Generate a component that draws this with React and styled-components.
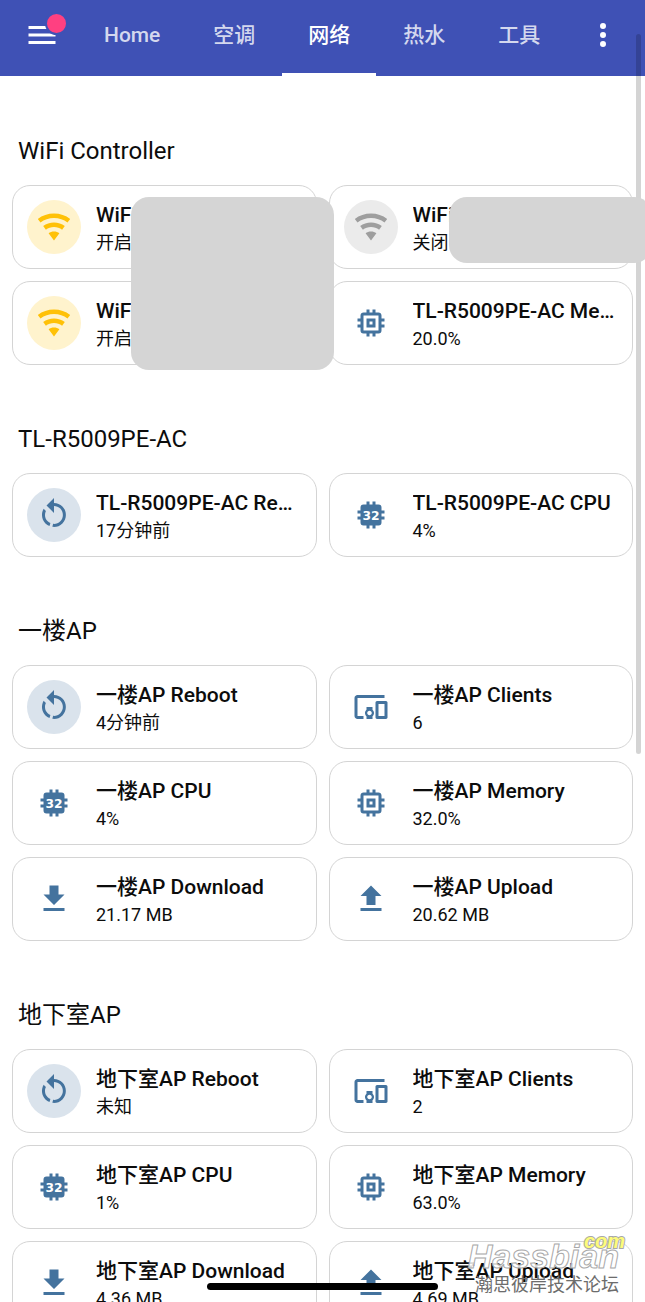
import React from "react";
import styled, { createGlobalStyle } from "styled-components";

const GlobalStyle = createGlobalStyle`
  *, *::before, *::after { box-sizing: border-box; }
  body {
    margin: 0;
    background: #fff;
    color: #0c0c0c;
    font-family: Roboto, "Noto Sans CJK SC", sans-serif;
  }
  button { font: inherit; color: inherit; background: none; border: 0; padding: 0; cursor: pointer; }
  h2, h3, p { margin: 0; font-weight: 400; }
`;

const Screen = styled.div`
  position: relative;
  display: flex;
  flex-direction: column;
  height: 100vh;
  overflow: hidden;
`;

const Toolbar = styled.header`
  flex: none;
  display: flex;
  align-items: stretch;
  height: 76px;
  padding: 0 6px;
  background: #3f51b5;
  color: #fff;
`;

const ToolButton = styled.button`
  position: relative;
  display: flex;
  align-items: center;
  justify-content: center;
  width: 72px;
  padding-bottom: 6px;
`;

const Badge = styled.span`
  position: absolute;
  top: 12px;
  right: 10px;
  width: 23px;
  height: 23px;
  border: 2px solid #3f51b5;
  border-radius: 50%;
  background: #ff4081;
`;

const Tabs = styled.nav`
  flex: 1;
  display: flex;
  gap: 1px;
`;

const Tab = styled.a`
  display: flex;
  align-items: center;
  padding: 0 26px 3px;
  border-bottom: 3px solid ${(p) => (p.$active ? "#fff" : "transparent")};
  color: ${(p) => (p.$active ? "#fff" : "#d4d8ee")};
  font-size: 21px;
  font-weight: 500;
  line-height: 24px;
  text-decoration: none;
`;

const Content = styled.main`
  position: relative;
  flex: 1;
  min-height: 0;
  padding: 1px 12px 12px;
  overflow: hidden auto;
  scrollbar-width: none;
`;

const SectionTitle = styled.h2`
  padding: 58px 6px 18px;
  font-size: 24px;
  line-height: 32px;
`;

const Grid = styled.div`
  display: grid;
  grid-template-columns: repeat(2, minmax(0, 1fr));
  gap: 12px;
`;

const Card = styled.article`
  display: flex;
  align-items: center;
  gap: 15px;
  height: 84px;
  padding: 0 14px;
  border: 1px solid #d4d4d4;
  border-radius: 18px;
  background: #fff;
`;

const tones = {
  blue: { color: "#44739e", fill: "#dae3ec" },
  amber: { color: "#ffc107", fill: "#fff3cd" },
  grey: { color: "#9e9e9e", fill: "#ebebeb" },
};

const Shape = styled.span`
  flex: none;
  display: flex;
  align-items: center;
  justify-content: center;
  width: 54px;
  height: 54px;
  border-radius: 50%;
  color: ${(p) => tones[p.$tone].color};
  background: ${(p) => (p.$filled ? tones[p.$tone].fill : "transparent")};
`;

const Info = styled.div`
  min-width: 0;
  padding-top: 2px;
`;

const Name = styled.h3`
  overflow: hidden;
  font-size: 21px;
  font-weight: 500;
  line-height: 30px;
  white-space: nowrap;
  text-overflow: ellipsis;
`;

const State = styled.p`
  font-size: 18px;
  line-height: 26px;
`;

const Cover = styled.div`
  position: absolute;
  z-index: 2;
  top: 121px;
  left: ${(p) => p.$left};
  width: 203px;
  height: ${(p) => p.$height};
  border-radius: 18px;
  background: #d5d5d5;
`;

const ScrollThumb = styled.div`
  position: absolute;
  z-index: 1;
  top: 34px;
  right: 4px;
  width: 5px;
  height: 720px;
  border-radius: 3px;
  background: rgba(0, 0, 0, 0.17);
`;

const HomeBar = styled.div`
  position: absolute;
  bottom: 12px;
  left: 50%;
  width: 231px;
  height: 7px;
  margin-left: -116px;
  border-radius: 4px;
  background: #000;
`;

const Watermark = styled.div`
  position: absolute;
  right: 26px;
  bottom: 5px;
  color: #6c6c6c;
  font-size: 18px;
  line-height: 24px;
  text-align: right;
`;

const WatermarkName = styled.div`
  color: rgba(255, 255, 255, 0.85);
  font: italic 700 34px/34px "Liberation Sans", sans-serif;
  -webkit-text-stroke: 1px #a8a8a8;
`;

const WatermarkSuffix = styled.div`
  position: absolute;
  top: -10px;
  right: -6px;
  color: #fdfb7a;
  font: italic 700 20px/24px "Liberation Sans", sans-serif;
  -webkit-text-stroke: 2px #a8a8a8;
  paint-order: stroke fill;
`;

const paths = {
  menu: "M3,6H21V8H3V6M3,11H21V13H3V11M3,16H21V18H3V16Z",
  dots: "M12,16A2,2 0 0,1 14,18A2,2 0 0,1 12,20A2,2 0 0,1 10,18A2,2 0 0,1 12,16M12,10A2,2 0 0,1 14,12A2,2 0 0,1 12,14A2,2 0 0,1 10,12A2,2 0 0,1 12,10M12,4A2,2 0 0,1 14,6A2,2 0 0,1 12,8A2,2 0 0,1 10,6A2,2 0 0,1 12,4Z",
  wifi: "M12,21L15.6,16.2C14.6,15.45 13.35,15 12,15C10.65,15 9.4,15.45 8.4,16.2L12,21M12,3C7.95,3 4.21,4.34 1.2,6.6L3,9C5.5,7.12 8.62,6 12,6C15.38,6 18.5,7.12 21,9L22.8,6.6C19.79,4.34 16.05,3 12,3M12,9C9.3,9 6.81,9.89 4.8,11.4L6.6,13.8C8.1,12.67 9.97,12 12,12C14.03,12 15.9,12.67 17.4,13.8L19.2,11.4C17.19,9.89 14.7,9 12,9Z",
  memory: "M17,17H7V7H17M21,11V9H19V7C19,5.89 18.1,5 17,5H15V3H13V5H11V3H9V5H7C5.89,5 5,5.89 5,7V9H3V11H5V13H3V15H5V17A2,2 0 0,0 7,19H9V21H11V19H13V21H15V19H17A2,2 0 0,0 19,17V15H21V13H19V11M13,13H11V11H13M15,9H9V15H15V9Z",
  cpu: "M9,3V5H7A2,2 0 0,0 5,7V9H3V11H5V13H3V15H5V17A2,2 0 0,0 7,19H9V21H11V19H13V21H15V19H17A2,2 0 0,0 19,17V15H21V13H19V11H21V9H19V7A2,2 0 0,0 17,5H15V3H13V5H11V3Z",
  restart: "M12,4C14.1,4 16.1,4.8 17.6,6.3C20.7,9.4 20.7,14.5 17.6,17.6C15.8,19.5 13.3,20.2 10.9,19.9L11.4,17.9C13.1,18.1 14.9,17.5 16.2,16.2C18.5,13.9 18.5,10.1 16.2,7.7C15.1,6.6 13.5,6 12,6V10.6L7,5.6L12,0.6V4M6.3,17.6C3.7,15 3.3,11 5.1,7.9L6.6,9.4C5.5,11.6 5.9,14.4 7.8,16.2C8.3,16.7 8.9,17.1 9.6,17.4L9,19.4C8,19 7.1,18.4 6.3,17.6Z",
  devices: "M3 6h18V4H3c-1.1 0-2 .9-2 2v12c0 1.1.9 2 2 2h4v-2H3V6zm10 6H9v1.78c-.61.55-1 1.33-1 2.22s.39 1.67 1 2.22V20h4v-1.78c.61-.55 1-1.34 1-2.22s-.39-1.67-1-2.22V12zm-2 5.5c-.83 0-1.5-.67-1.5-1.5s.67-1.5 1.5-1.5 1.5.67 1.5 1.5-.67 1.5-1.5 1.5zM22 8h-6c-.5 0-1 .5-1 1v10c0 .5.5 1 1 1h6c.5 0 1-.5 1-1V9c0-.5-.5-1-1-1zm-1 10h-4v-8h4v8z",
  download: "M5,20H19V18H5M19,9H15V3H9V9H5L12,16L19,9Z",
  upload: "M9,16V10H5L12,3L19,10H15V16H9M5,20V18H19V20H5Z",
};

function Icon({ name }) {
  return (
    <svg width="36" height="36" viewBox="0 0 24 24" fill="currentColor" aria-hidden="true">
      <path d={paths[name]} />
      {name === "cpu" && (
        <text x="12" y="15" textAnchor="middle" fill="#fff" fontFamily="DejaVu Sans" fontWeight="700" fontSize="8.2">
          32
        </text>
      )}
    </svg>
  );
}

const tabs = ["Home", "空调", "网络", "热水", "工具"];

const apCards = (name, v) => [
  { icon: "restart", filled: true, name: `${name} Reboot`, state: v[0] },
  { icon: "devices", name: `${name} Clients`, state: v[1] },
  { icon: "cpu", name: `${name} CPU`, state: v[2] },
  { icon: "memory", name: `${name} Memory`, state: v[3] },
  { icon: "download", name: `${name} Download`, state: v[4] },
  { icon: "upload", name: `${name} Upload`, state: v[5] },
];

const sections = [
  {
    title: "WiFi Controller",
    cards: [
      { icon: "wifi", tone: "amber", filled: true, name: "WiFi", state: "开启" },
      { icon: "wifi", tone: "grey", filled: true, name: "WiFi", state: "关闭" },
      { icon: "wifi", tone: "amber", filled: true, name: "WiFi", state: "开启" },
      { icon: "memory", name: "TL-R5009PE-AC Memory", state: "20.0%" },
    ],
  },
  {
    title: "TL-R5009PE-AC",
    cards: [
      { icon: "restart", filled: true, name: "TL-R5009PE-AC Reboot", state: "17分钟前" },
      { icon: "cpu", name: "TL-R5009PE-AC CPU", state: "4%" },
    ],
  },
  { title: "一楼AP", cards: apCards("一楼AP", ["4分钟前", "6", "4%", "32.0%", "21.17 MB", "20.62 MB"]) },
  { title: "地下室AP", cards: apCards("地下室AP", ["未知", "2", "1%", "63.0%", "4.36 MB", "4.69 MB"]) },
];

function EntityCard({ icon, tone = "blue", filled, name, state }) {
  return (
    <Card>
      <Shape as={filled ? "button" : "span"} aria-label={filled ? name : undefined} $tone={tone} $filled={filled}>
        <Icon name={icon} />
      </Shape>
      <Info>
        <Name>{name}</Name>
        <State>{state}</State>
      </Info>
    </Card>
  );
}

export default function App() {
  return (
    <Screen>
      <GlobalStyle />
      <Toolbar>
        <ToolButton aria-label="Menu">
          <Icon name="menu" />
          <Badge />
        </ToolButton>
        <Tabs>
          {tabs.map((t) => (
            <Tab key={t} href="#" $active={t === "网络"}>
              {t}
            </Tab>
          ))}
        </Tabs>
        <ToolButton aria-label="More">
          <Icon name="dots" />
        </ToolButton>
      </Toolbar>
      <Content>
        {sections.map((s) => (
          <section key={s.title}>
            <SectionTitle>{s.title}</SectionTitle>
            <Grid>
              {s.cards.map((c, i) => (
                <EntityCard key={i} {...c} />
              ))}
            </Grid>
          </section>
        ))}
        <Cover $left="131px" $height="173px" />
        <Cover $left="449px" $height="66px" />
      </Content>
      <ScrollThumb />
      <HomeBar />
      <Watermark>
        <WatermarkName>Hassbian</WatermarkName>
        <WatermarkSuffix>com</WatermarkSuffix>
        瀚思彼岸技术论坛
      </Watermark>
    </Screen>
  );
}
